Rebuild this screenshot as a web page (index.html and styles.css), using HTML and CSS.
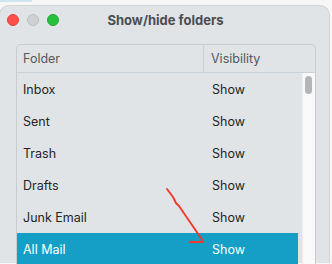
FILE: index.html
```html
<!DOCTYPE html>
<html lang="en">
<head>
    <meta charset="UTF-8">
    <title>Show/hide folders</title>
    <link rel="stylesheet" href="styles.css">
</head>
<body>
    <div class="desk">
        <div class="sliver"></div>
    </div>

    <div class="window">
        <!-- Заголовок окна -->
        <div class="titlebar">
            <div class="lights">
                <span class="light red"></span>
                <span class="light grey"></span>
                <span class="light green"></span>
            </div>
            <div class="title">Show/hide folders</div>
        </div>

        <!-- Таблица папок -->
        <div class="table">
            <div class="thead">
                <div class="col-folder">Folder</div>
                <div class="col-vis">Visibility</div>
            </div>
            <div class="tbody">
                <div class="rows">
                    <div class="row"><div class="col-folder">Inbox</div><div class="col-vis">Show</div></div>
                    <div class="row"><div class="col-folder">Sent</div><div class="col-vis">Show</div></div>
                    <div class="row"><div class="col-folder">Trash</div><div class="col-vis">Show</div></div>
                    <div class="row"><div class="col-folder">Drafts</div><div class="col-vis">Show</div></div>
                    <div class="row"><div class="col-folder">Junk Email</div><div class="col-vis">Show</div></div>
                    <div class="row selected"><div class="col-folder">All Mail</div><div class="col-vis">Show</div></div>
                </div>
                <div class="scrollbar">
                    <div class="thumb"></div>
                </div>
            </div>
        </div>
    </div>

    <!-- Пометка стрелкой -->
    <svg class="mark" width="332" height="264" viewBox="0 0 332 264">
        <path d="M167 189 L173 197 L176 203 L179 206 L203 241 M190 242 L203 242" fill="none" stroke="#f2392b" stroke-width="1.9" stroke-linecap="round" stroke-linejoin="round"/>
    </svg>
</body>
</html>
```

FILE: styles.css
```css
body {
    margin: 0;
    background: #f7f7f7;
    font-family: Inter, "Liberation Sans", sans-serif;
    width: 332px;
    height: 264px;
    overflow: hidden;
    position: relative;
}

.desk {
    height: 5px;
}

.sliver {
    width: 32px;
    height: 2px;
    background: #cfe6ef;
}

.window {
    width: 331px;
    height: 258px;
    background: #e0e4e7;
    border: 1px solid #d2d4d6;
    border-bottom: none;
    border-radius: 10px 10px 0 0;
    margin-left: -1px;
    box-sizing: border-box;
}

.titlebar {
    height: 38px;
    position: relative;
    display: flex;
    align-items: center;
    justify-content: center;
    padding-bottom: 10px;
    box-sizing: border-box;
}

.lights {
    position: absolute;
    left: 7px;
    top: 8px;
    display: flex;
    gap: 8px;
}

.light {
    width: 12px;
    height: 12px;
    border-radius: 50%;
    box-sizing: border-box;
}

.red {
    background: #fe4f4a;
    border: 1px solid #e4403b;
}

.grey {
    background: #cfd0d2;
    border: 1px solid #bebfc1;
}

.green {
    background: #27c03f;
    border: 1px solid #1ea934;
}

.title {
    font-size: 13px;
    font-weight: 700;
    color: #4b4d50;
    margin-left: 2px;
}

.table {
    margin-left: 16px;
    width: 300px;
    border: 1px solid #c9cdd1;
    border-bottom: none;
    border-radius: 5px 5px 0 0;
    box-sizing: border-box;
    height: 221px;
    display: flex;
    flex-direction: column;
}

.thead {
    display: flex;
    height: 27px;
    border-bottom: 1px solid #c9d2d9;
    font-size: 12.5px;
    color: #55585b;
    align-items: stretch;
}

.thead .col-folder,
.thead .col-vis {
    display: flex;
    align-items: center;
}

.col-folder {
    width: 187px;
    padding-left: 6px;
    box-sizing: border-box;
}

.thead .col-folder {
    border-right: 1px solid #c9d2d9;
}

.col-vis {
    padding-left: 7px;
}

.tbody {
    flex: 1;
    display: flex;
}

.rows {
    flex: 1;
    padding-right: 4px;
}

.row {
    height: 32px;
    display: flex;
    align-items: center;
    font-size: 12.5px;
    color: #232527;
}

.row .col-folder {
    width: 188px;
}

.row.selected {
    background: #159fc6;
    color: #fff;
}

.scrollbar {
    width: 13px;
    background: #f9f9f9;
    border-left: 1px solid #eceeef;
    box-sizing: border-box;
    padding: 3px 0 0 2px;
}

.thumb {
    width: 7px;
    height: 18px;
    border-radius: 4px;
    background: #b4b5b7;
}

.mark {
    position: absolute;
    left: 0;
    top: 0;
}
```
